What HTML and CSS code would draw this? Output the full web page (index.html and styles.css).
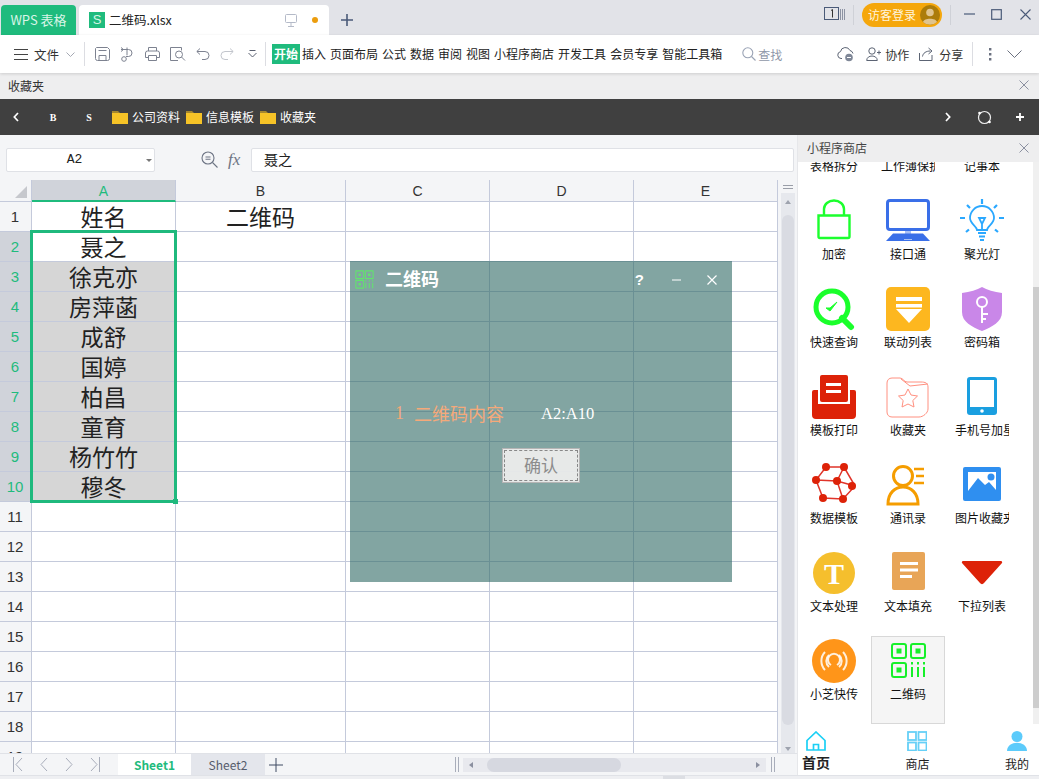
FILE: index.html
```html
<!DOCTYPE html>
<html lang="zh-CN">
<head>
<meta charset="utf-8">
<title>二维码.xlsx</title>
<link rel="stylesheet" href="styles.css">
</head>
<body>
<div class="app">
  <header class="titlebar">
    <div class="tab-home">WPS 表格</div>
    <div class="tab-doc">
      <span class="s-badge">S</span>
      <span class="doc-name">二维码.xlsx</span>
      <svg class="doc-mon" viewBox="0 0 12 13" width="12" height="13"><rect x=".5" y=".5" width="11" height="8" rx="1" fill="none" stroke="#b4bac8"/><path d="M6 9v3M3 12.500h6" stroke="#b4bac8"/></svg>
      <span class="doc-dot"></span>
    </div>
    <svg class="tab-plus" viewBox="0 0 12 12" width="12" height="12"><path d="M6 0v12M0 6h12" stroke="#4a5a78" stroke-width="1.600"/></svg>
    <div class="title-right">
      <svg viewBox="0 0 21 14" width="21" height="14"><rect x=".5" y=".5" width="14" height="12" fill="none" stroke="#4a5a78"/><path d="M7 3.500l1.500-1v8" fill="none" stroke="#333"/><path d="M16.500 2v11M18.500 2v11M20.500 2v11" stroke="#8d93a3"/></svg>
      <span class="vline"></span>
      <div class="login"><span>访客登录</span>
        <svg class="avatar" viewBox="0 0 20 20" width="20" height="20"><circle cx="10" cy="10" r="10" fill="#ac7c0a"/><circle cx="10" cy="7.500" r="3.800" fill="#e0c48e"/><path d="M3 17c1-4.500 13-4.500 14 0a10 10 0 0 1-14 0z" fill="#e0c48e"/></svg>
      </div>
      <span class="vline"></span>
      <svg viewBox="0 0 12 12" width="12" height="12" class="win-min"><path d="M0 6h11" stroke="#4a5a78" stroke-width="1.200"/></svg>
      <svg viewBox="0 0 11 11" width="11" height="11" class="win-max"><rect x=".7" y=".7" width="9.600" height="9.600" fill="none" stroke="#4a5a78" stroke-width="1.200"/></svg>
      <svg viewBox="0 0 11 11" width="11" height="11" class="win-close"><path d="M.5.500l10 10M10.500.500l-10 10" stroke="#4a5a78" stroke-width="1.100"/></svg>
    </div>
  </header>

  <nav class="toolbar">
    <svg class="t-menu" viewBox="0 0 14 11" width="14" height="11"><path d="M0 .5h14M0 5.500h14M0 10.500h14" stroke="#444"/></svg>
    <span class="t-file">文件</span>
    <svg class="t-chev" viewBox="0 0 9 5" width="9" height="5"><path d="M.5.500l4 4 4-4" fill="none" stroke="#a5a9b3"/></svg>
    <span class="t-div"></span>
    <div class="t-icons">
      <svg viewBox="0 0 15 14" width="15" height="14"><path d="M1.500.5h11l2 2v9a2 2 0 0 1-2 2h-10a2 2 0 0 1-2-2v-10z M4 13.500v-5h7v5M3.500 3.500h8" fill="none" stroke="#7d8290"/></svg>
      <svg viewBox="0 0 15 15" width="15" height="15"><path d="M1 2.500h7.500a3.500 3.500 0 0 1 0 7H6M7 .5v7.800M1 .5l2.500 2-2.500 2" fill="none" stroke="#7d8290"/><circle cx="4" cy="12" r="2.300" fill="none" stroke="#7d8290"/></svg>
      <svg viewBox="0 0 15 14" width="15" height="14"><path d="M3.500 4V.5h8V4M3 10.500H.5V6a2 2 0 0 1 2-2h10a2 2 0 0 1 2 2v4.500H12M3.500 8.500h8v5h-8z" fill="none" stroke="#7d8290"/></svg>
      <svg viewBox="0 0 16 14" width="16" height="14"><path d="M8 13.500H.5V.5h11v3" fill="none" stroke="#7d8290"/><circle cx="9" cy="7.500" r="3.500" fill="none" stroke="#7d8290"/><path d="M11.500 10l3.500 3.500" stroke="#7d8290"/></svg>
      <svg viewBox="0 0 14 12" width="14" height="12"><path d="M4 .5L.8 3.500 4 6.500M1 3.500h8a4 4 0 0 1 0 8H6" fill="none" stroke="#7d8290"/></svg>
      <svg viewBox="0 0 14 12" width="14" height="12"><path d="M10 .5l3.200 3-3.200 3M13 3.500H5a4 4 0 0 0 0 8h3" fill="none" stroke="#c2c5cc"/></svg>
      <svg class="t-more" viewBox="0 0 9 8" width="9" height="8"><path d="M.5 3l4 4 4-4M1.500.5h6" fill="none" stroke="#5a6070"/></svg>
    </div>
    <span class="t-div t-div2"></span>
    <div class="t-tabs">
      <span class="t-active">开始</span>
      <span>插入</span><span>页面布局</span><span>公式</span><span>数据</span><span>审阅</span><span>视图</span><span>小程序商店</span><span>开发工具</span><span>会员专享</span><span>智能工具箱</span>
    </div>
    <div class="t-search">
      <svg viewBox="0 0 14 14" width="14" height="14"><circle cx="5.800" cy="5.800" r="5" fill="none" stroke="#9aa3b5" stroke-width="1.100"/><path d="M9.500 9.500l4 4" stroke="#9aa3b5" stroke-width="1.100"/></svg>
      <span>查找</span>
    </div>
    <div class="t-right">
      <svg class="t-cloud" viewBox="0 0 17 16" width="17" height="16"><path d="M5 12.500H4A3.500 3.500 0 0 1 3.500 5.600 5 5 0 0 1 13 4.500a4 4 0 0 1 3 3" fill="none" stroke="#5c6474"/><circle cx="12" cy="11.500" r="3.800" fill="#7f8797"/><path d="M10 11.500h4" stroke="#fff"/></svg>
      <svg class="t-collab" viewBox="0 0 15 14" width="15" height="14"><circle cx="6" cy="4" r="3.200" fill="none" stroke="#5c6474"/><path d="M.7 13.500c0-6 10.600-6 10.600 0zM11 5.500h4M13 3.500v4" fill="none" stroke="#5c6474"/></svg>
      <span>协作</span>
      <svg class="t-share" viewBox="0 0 15 14" width="15" height="14"><path d="M.5 6v7.500h12.500V8M3.500 9.500c.5-3.500 3.500-5.500 8-5.500M9.500 1l3.500 3-3.500 3" fill="none" stroke="#5c6474"/></svg>
      <span>分享</span>
      <span class="t-div t-div3"></span>
      <svg class="t-dots" viewBox="0 0 3 13" width="3" height="13"><path d="M0 0h2.400v2.400H0zM0 5h2.400v2.400H0zM0 10h2.400v2.400H0z" fill="#6b7180"/></svg>
      <svg class="t-down" viewBox="0 0 15 8" width="15" height="8"><path d="M.5.500l7 7 7-7" fill="none" stroke="#6b7180"/></svg>
    </div>
  </nav>

  <div class="favbar">
    <span>收藏夹</span>
    <svg viewBox="0 0 10 10" width="10" height="10"><path d="M.5.500l9 9M9.500.500l-9 9" stroke="#8b90a0"/></svg>
  </div>

  <div class="darkbar">
    <svg class="d-back" viewBox="0 0 6 10" width="6" height="10"><path d="M5 1L1.300 5 5 9" fill="none" stroke="#fff" stroke-width="1.700"/></svg>
    <span class="d-letter d-b">B</span>
    <span class="d-letter d-s">S</span>
    <div class="d-folder">
      <svg viewBox="0 0 16 14" width="16" height="14"><path d="M0 1h6l2 2h8v2H0z" fill="#a5872f"/><path d="M0 3h16v11H0z" fill="#f6c327"/></svg><span>公司资料</span>
      <svg viewBox="0 0 16 14" width="16" height="14"><path d="M0 1h6l2 2h8v2H0z" fill="#a5872f"/><path d="M0 3h16v11H0z" fill="#f6c327"/></svg><span>信息模板</span>
      <svg viewBox="0 0 16 14" width="16" height="14"><path d="M0 1h6l2 2h8v2H0z" fill="#a5872f"/><path d="M0 3h16v11H0z" fill="#f6c327"/></svg><span>收藏夹</span>
    </div>
    <div class="d-right">
      <svg viewBox="0 0 6 10" width="6" height="10"><path d="M1 1l3.700 4L1 9" fill="none" stroke="#fff" stroke-width="1.700"/></svg>
      <svg viewBox="0 0 15 15" width="15" height="15"><circle cx="7.500" cy="7.500" r="6" fill="none" stroke="#eee" stroke-width="1.200"/><circle cx="2.500" cy="3" r="1.300" fill="#fff"/><circle cx="12.500" cy="12" r="1.300" fill="#fff"/></svg>
      <svg viewBox="0 0 8 8" width="8" height="8"><path d="M4 0v8M0 4h8" stroke="#fff" stroke-width="1.800"/></svg>
    </div>
  </div>

  <div class="body">
    <main class="sheet">
      <div class="formula">
        <div class="namebox"><span>A2</span><i class="namecaret"></i></div>
        <svg class="f-zoom" viewBox="0 0 17 17" width="17" height="17"><circle cx="7" cy="7" r="6" fill="none" stroke="#6d7484" stroke-width="1.100"/><path d="M11.500 11.500l5 5M4.500 6h5M4.500 8.200h5" stroke="#6d7484" stroke-width="1.100"/></svg>
        <span class="f-x">fx</span>
        <div class="f-input">聂之</div>
      </div>
      <div class="gridwrap">
        <div class="grid">
          <div class="corner"><i></i></div>
          <div class="ch ch-on">A</div><div class="ch">B</div><div class="ch">C</div><div class="ch">D</div><div class="ch">E</div>

          <div class="rh">1</div><div class="c">姓名</div><div class="c">二维码</div><div class="c"></div><div class="c"></div><div class="c"></div>
          <div class="rh rh-on">2</div><div class="c">聂之</div><div class="c"></div><div class="c"></div><div class="c"></div><div class="c"></div>
          <div class="rh rh-on">3</div><div class="c c-sel">徐克亦</div><div class="c"></div><div class="c"></div><div class="c"></div><div class="c"></div>
          <div class="rh rh-on">4</div><div class="c c-sel">房萍菡</div><div class="c"></div><div class="c"></div><div class="c"></div><div class="c"></div>
          <div class="rh rh-on">5</div><div class="c c-sel">成舒</div><div class="c"></div><div class="c"></div><div class="c"></div><div class="c"></div>
          <div class="rh rh-on">6</div><div class="c c-sel">国婷</div><div class="c"></div><div class="c"></div><div class="c"></div><div class="c"></div>
          <div class="rh rh-on">7</div><div class="c c-sel">柏昌</div><div class="c"></div><div class="c"></div><div class="c"></div><div class="c"></div>
          <div class="rh rh-on">8</div><div class="c c-sel">童育</div><div class="c"></div><div class="c"></div><div class="c"></div><div class="c"></div>
          <div class="rh rh-on">9</div><div class="c c-sel">杨竹竹</div><div class="c"></div><div class="c"></div><div class="c"></div><div class="c"></div>
          <div class="rh rh-on">10</div><div class="c c-sel">穆冬</div><div class="c"></div><div class="c"></div><div class="c"></div><div class="c"></div>
          <div class="rh">11</div><div class="c"></div><div class="c"></div><div class="c"></div><div class="c"></div><div class="c"></div>
          <div class="rh">12</div><div class="c"></div><div class="c"></div><div class="c"></div><div class="c"></div><div class="c"></div>
          <div class="rh">13</div><div class="c"></div><div class="c"></div><div class="c"></div><div class="c"></div><div class="c"></div>
          <div class="rh">14</div><div class="c"></div><div class="c"></div><div class="c"></div><div class="c"></div><div class="c"></div>
          <div class="rh">15</div><div class="c"></div><div class="c"></div><div class="c"></div><div class="c"></div><div class="c"></div>
          <div class="rh">16</div><div class="c"></div><div class="c"></div><div class="c"></div><div class="c"></div><div class="c"></div>
          <div class="rh">17</div><div class="c"></div><div class="c"></div><div class="c"></div><div class="c"></div><div class="c"></div>
          <div class="rh">18</div><div class="c"></div><div class="c"></div><div class="c"></div><div class="c"></div><div class="c"></div>
          <div class="rh">19</div><div class="c"></div><div class="c"></div><div class="c"></div><div class="c"></div><div class="c"></div>
          <div class="selection"><i></i></div>
        </div>
        <div class="vscroll">
          <div class="vs-grip"></div>
          <div class="vs-track"><i class="vs-up"></i><div class="vs-thumb"></div><i class="vs-arrow"></i></div>
        </div>
      </div>
      <div class="tabbar">
        <div class="tb-nav">
          <svg viewBox="0 0 10 15" width="10" height="15"><path d="M.5 0v15M9 1L3 7.500 9 14" fill="none" stroke="#a8adba"/></svg>
          <svg viewBox="0 0 8 15" width="8" height="15"><path d="M7 1L1 7.500 7 14" fill="none" stroke="#a8adba"/></svg>
          <svg viewBox="0 0 8 15" width="8" height="15"><path d="M1 1l6 6.500L1 14" fill="none" stroke="#a8adba"/></svg>
          <svg viewBox="0 0 10 15" width="10" height="15"><path d="M9.500 0v15M1 1l6 6.500L1 14" fill="none" stroke="#a8adba"/></svg>
        </div>
        <div class="tb-on">Sheet1</div>
        <div class="tb-off">Sheet2</div>
        <svg class="tb-add" viewBox="0 0 14 14" width="14" height="14"><path d="M7 0v14M0 7h14" stroke="#3f4a62"/></svg>
        <svg class="tb-split" viewBox="0 0 4 15" width="4" height="15"><path d="M.5 0v15M3.500 0v15" stroke="#a8adba"/></svg>
        <div class="hscroll"><i class="hs-l"></i><div class="hs-thumb"></div><i class="hs-r"></i></div>
        <svg class="tb-split2" viewBox="0 0 4 15" width="4" height="15"><path d="M.5 0v15M3.500 0v15" stroke="#a8adba"/></svg>
      </div>
    </main>

    <aside class="panel">
      <div class="p-head">
        <span>小程序商店</span>
        <svg viewBox="0 0 10 10" width="10" height="10"><path d="M.5.500l9 9M9.500.500l-9 9" stroke="#8b90a0"/></svg>
      </div>
      <div class="p-main">
        <div class="p-list">
          <div class="p-grid">
            <div class="app-i"><div class="ico"></div><div class="lbl">表格拆分</div></div>
            <div class="app-i"><div class="ico"></div><div class="lbl">工作薄保护</div></div>
            <div class="app-i"><div class="ico"></div><div class="lbl">记事本</div></div>

            <div class="app-i"><div class="ico"><svg viewBox="0 0 44 44" width="44" height="44"><path d="M6.500 16.500h31v21a1.500 1.500 0 0 1-1.500 1.500H8a1.500 1.500 0 0 1-1.500-1.500z M12 16v-6a10 8.500 0 0 1 20 0v6" fill="none" stroke="#1cff2e" stroke-width="2.400"/></svg></div><div class="lbl">加密</div></div>
            <div class="app-i"><div class="ico"><svg viewBox="0 0 44 44" width="44" height="44"><rect x="1.500" y="1.500" width="41" height="29" rx="2.500" fill="none" stroke="#3a6fe8" stroke-width="3"/><path d="M19 32h6v3h-6z" fill="#a9c0f5"/><path d="M7 34.500h30l7 7.500H0z" fill="#3a6fe8"/><path d="M18 40.500h8" stroke="#a9c0f5"/></svg></div><div class="lbl">接口通</div></div>
            <div class="app-i"><div class="ico"><svg viewBox="0 0 44 44" width="44" height="44"><g fill="none" stroke="#2aa8ff" stroke-width="1.800"><path d="M17 31c0-4-7-6-7-12a12 12 0 0 1 24 0c0 6-7 8-7 12z"/><path d="M18 34h8M19 37.500h6M20 41h4" stroke-width="2"/><path d="M19 19h6l-3 6zM22 25v6"/></g><path d="M22 0v5M7 6l3 3M37 6l-3 3M0 19h5M39 19h5M6 33l3-2.500M38 33l-3-2.500" stroke="#2aa8ff" stroke-width="2.200"/></svg></div><div class="lbl">聚光灯</div></div>

            <div class="app-i"><div class="ico"><svg viewBox="0 0 44 44" width="44" height="44"><circle cx="20" cy="20" r="16" fill="none" stroke="#1aff2b" stroke-width="5"/><path d="M30 31l9 9" stroke="#1aff2b" stroke-width="6" stroke-linecap="round"/><path d="M14 21l4 3 7-9-7 6z" fill="#1aff2b" stroke="#1aff2b"/></svg></div><div class="lbl">快速查询</div></div>
            <div class="app-i"><div class="ico"><svg viewBox="0 0 44 44" width="44" height="44"><rect width="44" height="44" rx="5" fill="#fdb71f"/><path d="M10 10h26v4H10zM10 17h26v3.500H10zM10 22h26L23 36z" fill="#fff"/></svg></div><div class="lbl">联动列表</div></div>
            <div class="app-i"><div class="ico"><svg viewBox="0 0 44 44" width="44" height="44"><path d="M22 0c5 3 12 5 20 6v19c0 10-10 15-20 19C12 40 2 35 2 25V6c8-1 15-3 20-6z" fill="#c987e8"/><circle cx="22" cy="15" r="5" fill="none" stroke="#fff" stroke-width="2"/><path d="M22 20v16M22 27h6M22 32h4" stroke="#fff" stroke-width="2"/></svg></div><div class="lbl">密码箱</div></div>

            <div class="app-i"><div class="ico"><svg viewBox="0 0 44 44" width="44" height="44"><rect x="8" y="0" width="28" height="27" rx="2" fill="#dd2208"/><path d="M14 8h15v3H14zM14 15h15v3H14z" fill="#fff"/><path d="M0 17a2 2 0 0 1 2-2h4v14h32V15h4a2 2 0 0 1 2 2v23a4 4 0 0 1-4 4H4a4 4 0 0 1-4-4z" fill="#dd2208"/></svg></div><div class="lbl">模板打印</div></div>
            <div class="app-i"><div class="ico"><svg viewBox="0 0 44 44" width="44" height="44"><path d="M6 3h8c3 0 4 4 7 4h14c4 0 7 1 7 5v22c0 4-5 8-9 8H6c-3 0-5-2-5-5V8c0-3 2-5 5-5zM15 4l9 7 18-2" fill="none" stroke="#ff9080"/><path d="M22 14l3 6 6.500 1-4.700 4.500 1.200 6.500-6-3-6 3 1.200-6.500L12.500 21l6.500-1z" fill="none" stroke="#ff9080"/></svg></div><div class="lbl">收藏夹</div></div>
            <div class="app-i"><div class="ico"><svg viewBox="0 0 44 44" width="44" height="44"><rect x="7" y="2" width="30" height="38" rx="3" fill="#1a9fe0"/><rect x="10" y="5" width="24" height="27" fill="#fff"/><circle cx="22" cy="36" r="1.800" fill="#fff"/></svg></div><div class="lbl lbl-clip">手机号加星</div></div>

            <div class="app-i"><div class="ico"><svg viewBox="0 0 44 44" width="44" height="44"><path d="M14 4h18l11 19-12 13-20-1L4 17zM4 17l21 1 18 5M25 18l7-14M25 18l6 18" fill="none" stroke="#e0342a" stroke-width="1.500"/><g fill="#dd2208"><circle cx="14" cy="4" r="4"/><circle cx="32" cy="4" r="4"/><circle cx="25" cy="18" r="4"/><circle cx="4" cy="17" r="4"/><circle cx="40" cy="23" r="4"/><circle cx="11" cy="35" r="4"/><circle cx="31" cy="36" r="4"/></g></svg></div><div class="lbl">数据模板</div></div>
            <div class="app-i"><div class="ico"><svg viewBox="0 0 44 44" width="44" height="44"><circle cx="17" cy="13" r="9.500" fill="none" stroke="#f59d00" stroke-width="3"/><path d="M2 41c0-11 7-17 15-17s15 6 15 17z" fill="none" stroke="#f59d00" stroke-width="3"/><path d="M28 6h10M30 13h8M28 20h10" stroke="#f59d00" stroke-width="2.400"/></svg></div><div class="lbl">通讯录</div></div>
            <div class="app-i"><div class="ico"><svg viewBox="0 0 44 44" width="44" height="44"><rect x="3" y="4" width="38" height="34" rx="2" fill="#2f8ff0"/><path d="M8 9h28v20H8z" fill="#fff"/><path d="M8 28l10-13 7 7 4-3 7 8v5H8z" fill="#2f8ff0"/><circle cx="31" cy="14" r="3.500" fill="#2f8ff0"/></svg></div><div class="lbl lbl-clip">图片收藏夹</div></div>

            <div class="app-i"><div class="ico"><svg viewBox="0 0 44 44" width="44" height="44"><circle cx="22" cy="22" r="21" fill="#f5bf2d"/><text x="22" y="33" class="t-letter">T</text></svg></div><div class="lbl">文本处理</div></div>
            <div class="app-i"><div class="ico"><svg viewBox="0 0 44 44" width="44" height="44"><rect x="6" y="1" width="33" height="38" rx="2" fill="#e8a557"/><path d="M14 11h18v3H14zM14 17.500h18v3H14zM14 24h12v3H14z" fill="#fff"/></svg></div><div class="lbl">文本填充</div></div>
            <div class="app-i"><div class="ico"><svg viewBox="0 0 44 44" width="44" height="44"><path d="M3 10h38c1 0 1.500 1 1 2L24 32c-1 1.500-3 1.500-4 0L2 12c-.5-1 0-2 1-2z" fill="#dd2208"/></svg></div><div class="lbl">下拉列表</div></div>

            <div class="app-i"><div class="ico"><svg viewBox="0 0 44 44" width="44" height="44"><circle cx="22" cy="22" r="22" fill="#ff9519"/><g fill="none" stroke="#fff" stroke-opacity=".85" stroke-width="2"><path d="M13 13A13 13 0 0 0 13 31M31 13A13 13 0 0 1 31 31M17 16A8 8 0 0 0 17 28M27 16A8 8 0 0 1 27 28"/><path d="M19 26A6 6 0 1 1 25 26"/></g></svg></div><div class="lbl">小芝快传</div></div>
            <div class="app-i app-on"><div class="ico"><svg viewBox="0 0 44 44" width="44" height="44"><g fill="none" stroke="#16f02a" stroke-width="2"><rect x="6" y="5" width="14" height="14" rx="2"/><rect x="25" y="5" width="14" height="14" rx="2"/><rect x="6" y="24" width="14" height="14" rx="2"/><path d="M26 23v2.500M26 28v10M32 23v2.500M32 28v10M38 23v2.500M38 28v10"/></g><path d="M10.500 9.500h5v5h-5zM29.500 9.500h5v5h-5zM10.500 28.500h5v5h-5z" fill="#16f02a"/></svg></div><div class="lbl">二维码</div></div>
          </div>
        </div>
        <div class="p-scroll"><div class="p-thumb"></div></div>
      </div>
      <div class="p-foot">
        <div class="p-nav p-nav-on"><svg viewBox="0 0 20 20" width="20" height="20"><path d="M1 9.500L10 1l9 8.500V19H1z M7.500 19v-5.500h5V19" fill="none" stroke="#1bd0f5" stroke-width="1.700"/></svg><span>首页</span></div>
        <div class="p-nav"><svg viewBox="0 0 20 20" width="20" height="20"><g fill="#fff" stroke="#66d0f7" stroke-width="1.800"><rect x="1" y="1" width="8" height="8"/><rect x="11.500" y="1" width="8" height="8"/><rect x="1" y="11.500" width="8" height="8"/><rect x="11.500" y="11.500" width="8" height="8"/></g></svg><span>商店</span></div>
        <div class="p-nav"><svg viewBox="0 0 20 20" width="20" height="20"><circle cx="10" cy="5.500" r="5.500" fill="#5ccbfb"/><path d="M0 20c0-11 20-11 20 0z" fill="#5ccbfb"/></svg><span>我的</span></div>
      </div>
    </aside>
  </div>

  <footer class="statusline"><i></i></footer>

  <section class="dialog">
    <div class="dlg-title">
      <svg viewBox="0 0 44 44" width="19" height="19"><g fill="none" stroke="#62e46e" stroke-width="2.400"><rect x="2" y="2" width="18" height="18" rx="1"/><rect x="24" y="2" width="18" height="18" rx="1"/><rect x="2" y="24" width="18" height="18" rx="1"/><path d="M25 24v3M25 30v12M33 24v3M33 30v12M41 24v3M41 30v12"/></g><path d="M8 8h6v6H8zM30 8h6v6h-6zM8 30h6v6H8z" fill="#62e46e"/></svg>
      <span class="dlg-name">二维码</span>
      <span class="dlg-q">?</span>
      <svg class="dlg-min" viewBox="0 0 9 2" width="9" height="2"><path d="M0 1h9" stroke="#fff"/></svg>
      <svg class="dlg-x" viewBox="0 0 10 10" width="10" height="10"><path d="M.5.500l9 9M9.500.500l-9 9" stroke="#fff" stroke-width="1.200"/></svg>
    </div>
    <div class="dlg-row"><span class="dlg-num">1</span><span class="dlg-label">二维码内容</span><span class="dlg-val">A2:A10</span></div>
    <div class="dlg-btn"><span>确认</span></div>
  </section>
</div>
</body>
</html>
```
FILE: styles.css
```css
* { box-sizing: border-box; }
html, body { margin: 0; padding: 0; }
body { font-family: "Noto Sans CJK SC", "Liberation Sans", sans-serif; color: #222; overflow: hidden; }
svg { display: block; flex: none; }
i { display: block; }
.app { position: relative; width: 1039px; height: 779px; overflow: hidden; display: flex; flex-direction: column; background: #f0f1f4; }

/* title bar */
.titlebar { height: 35px; flex: none; background: #e2e3e8; display: flex; align-items: flex-end; padding-left: 1px; }
.tab-home { width: 75px; height: 30px; background: #1fbb7d; color: #d9f5e8; border-radius: 4px 4px 0 0; font: 13px/30px "Noto Sans CJK SC", "Liberation Sans", sans-serif; text-align: center; }
.tab-doc { width: 250px; height: 30px; margin-left: 3px; background: #fff; border-radius: 4px 4px 0 0; display: flex; align-items: center; padding-left: 10px; position: relative; }
.s-badge { width: 16px; height: 16px; background: #1fbb7d; color: #d6f5e6; font: 13px/16px "Liberation Sans", sans-serif; text-align: center; }
.doc-name { margin-left: 4px; font-size: 12.500px; color: #222; line-height: 16px; }
.doc-mon { margin-left: 113px; }
.doc-dot { width: 6px; height: 6px; border-radius: 50%; background: #ec9d0d; margin-left: 15px; }
.tab-plus { margin: 0 0 9px 12px; }
.title-right { margin-left: auto; height: 35px; display: flex; align-items: flex-start; padding-top: 7px; }
.vline { width: 1px; height: 20px; background: #cfd1d7; margin: -2px 8px 0 8px; }
.login { width: 80px; height: 24px; margin-top: -4px; border-radius: 12px; background: #f5a70c; color: #fff5dc; font-size: 12px; line-height: 24px; display: flex; justify-content: space-between; align-items: center; padding: 0 2px 0 6px; }
.win-min { margin: 1px 0 0 5px; }
.win-max { margin: 2px 0 0 15px; }
.win-close { margin: 2px 8px 0 18px; }

/* toolbar */
.toolbar { height: 38px; flex: none; background: #fff; display: flex; align-items: center; padding-left: 14px; box-shadow: 0 1px 3px rgba(0,0,0,.14); position: relative; z-index: 2; font-size: 12px; color: #333; }
.t-file { margin-left: 6px; font-size: 12.500px; width: 24px; white-space: nowrap; }
.t-chev { margin-left: 8px; }
.t-div { width: 1px; height: 24px; background: #dcdde2; margin-left: 9px; }
.t-icons { display: flex; align-items: center; gap: 10px; margin-left: 10px; width: 161px; }
.t-more { margin-left: 4px; }
.t-div2 { margin-left: 9px; }
.t-tabs { display: flex; align-items: center; gap: 4px; margin-left: 6px; color: #222; white-space: nowrap; line-height: 20px; }
.t-active { width: 28px; height: 20px; background: #1fbb7d; color: #fff; font-weight: 700; text-align: center; margin-right: -2px; }
.t-search { display: flex; align-items: center; gap: 2px; margin-left: 20px; color: #8f97a8; }
.t-right { display: flex; align-items: center; margin-left: 55px; }
.t-collab { margin: 0 4px 0 12px; }
.t-share { margin: 0 5px 0 10px; }
.t-div3 { margin-left: 9px; }
.t-dots { margin-left: 16px; }
.t-down { margin-left: 15px; }

/* favourites */
.favbar { height: 26px; flex: none; background: #eeeeef; display: flex; align-items: center; justify-content: space-between; padding: 0 10px 2px 8px; font-size: 12px; color: #333; }
.darkbar { height: 36px; flex: none; background: #404040; color: #fff; display: flex; align-items: center; font-size: 12px; padding-left: 13px; }
.d-letter { font: 700 10px "Liberation Serif", serif; width: 8px; text-align: center; }
.d-b { margin-left: 30px; }
.d-s { margin-left: 28px; }
.d-folder { display: flex; align-items: center; margin-left: 19px; }
.d-folder span { margin: 0 6px 0 4px; line-height: 16px; }
.d-right { margin-left: auto; display: flex; align-items: center; padding-right: 15px; }
.d-right svg:nth-child(2) { margin: 0 24px 0 26px; }

/* body */
.body { flex: 1; min-height: 0; display: flex; }
.sheet { width: 797px; flex: none; display: flex; flex-direction: column; background: #f4f5f7; }
.formula { height: 45px; flex: none; display: flex; align-items: flex-start; padding: 13px 3px 0 6px; }
.namebox { width: 149px; height: 24px; background: #fff; border: 1px solid #dfe1e6; border-radius: 2px; position: relative; font: 13px/22px "Liberation Mono", monospace; color: #222; padding-right: 12px; text-align: center; }
.namecaret { position: absolute; right: 2px; top: 10px; border: 3px solid transparent; border-top: 3px solid #777; }
.f-zoom { margin: 3px 0 0 46px; }
.f-x { margin-left: 10px; font: italic 17px/24px "Liberation Serif", serif; color: #6d7484; width: 23px; }
.f-input { flex: 1; height: 24px; background: #fff; border: 1px solid #dfe1e6; border-radius: 2px; font-size: 14px; line-height: 21px; padding-left: 12px; color: #222; }

.gridwrap { flex: 1; min-height: 0; display: flex; overflow: hidden; }
.grid { position: relative; width: 778px; flex: none; display: grid; grid-template-columns: 32px 144px 170px 144px 144px 144px; grid-template-rows: 22px repeat(19, 30px); overflow: hidden; background: #fff; }
.corner { background: #f4f5f7; border-bottom: 1px solid #c4cadb; border-right: 1px solid #c4cadb; position: relative; }
.corner i { position: absolute; right: 4px; bottom: 3px; width: 0; height: 0; border-left: 12px solid transparent; border-bottom: 12px solid #c6c8cd; }
.ch { background: #f4f5f7; border-bottom: 1px solid #c4cadb; border-right: 1px solid #c4cadb; text-align: center; font: 14px/22px "Liberation Sans", sans-serif; color: #333; }
.ch-on { background: #d0d3da; color: #1fbb7d; border-bottom: 2px solid #1fbb7d; }
.rh { background: #f4f5f7; border-bottom: 1px solid #c4cadb; border-right: 1px solid #c4cadb; font: 15px/29px "Liberation Sans", sans-serif; text-align: center; color: #333; padding-right: 1px; }
.rh-on { background: #d0d3da; color: #1fbb7d; }
.c { border-bottom: 1px solid #c4cadb; border-right: 1px solid #c4cadb; font-size: 23px; line-height: 29px; text-align: center; color: #222; white-space: nowrap; }
.c-sel { background: #d6d6d6; }
.selection { position: absolute; left: 30px; top: 50px; width: 147px; height: 273px; border: 3px solid #1fb97d; pointer-events: none; }
.selection i { position: absolute; right: -4px; bottom: -4px; width: 5px; height: 5px; background: #1fb97d; }

.vscroll { flex: 1; background: #f4f5f7; position: relative; }
.vs-grip { position: absolute; left: 5px; top: 5px; width: 10px; height: 4px; border-top: 1px solid #9a9ea8; border-bottom: 1px solid #9a9ea8; }
.vs-track { position: absolute; left: 3px; right: 2px; top: 13px; bottom: 0; background: #e6e8ed; }
.vs-up { position: absolute; left: 4px; top: 7px; border: 3px solid transparent; border-bottom: 4px solid #9ea3ae; border-top: 0; }
.vs-thumb { position: absolute; left: 1px; top: 22px; width: 12px; height: 510px; border-radius: 6px; background: #d9dbe2; }
.vs-arrow { position: absolute; left: 4px; bottom: 2px; border: 3px solid transparent; border-top: 4px solid #9ea3ae; border-bottom: 0; }

.tabbar { height: 22px; flex: none; background: #f4f5f7; display: flex; align-items: center; border-top: 1px solid #e0e2e7; }
.tb-nav { width: 118px; display: flex; align-items: center; gap: 17px; padding-left: 13px; }
.tb-on { width: 73px; height: 22px; background: #fff; color: #1fbb7d; font-size: 12px; font-weight: 700; line-height: 21px; text-align: center; }
.tb-off { width: 74px; height: 22px; background: #e4e6ec; color: #555b6b; font-size: 12px; line-height: 21px; text-align: center; }
.tb-add { margin-left: 4px; }
.tb-split { margin-left: 172px; }
.hscroll { width: 303px; height: 14px; margin-left: 4px; background: #e8e9ee; position: relative; }
.hs-thumb { position: absolute; left: 24px; top: 0; width: 134px; height: 14px; border-radius: 7px; background: #d6d8e0; }
.hs-l { position: absolute; left: 6px; top: 4px; border: 3px solid transparent; border-right: 4px solid #8b90a0; border-left: 0; }
.hs-r { position: absolute; right: 6px; top: 4px; border: 3px solid transparent; border-left: 4px solid #8b90a0; border-right: 0; }
.tb-split2 { margin-left: 5px; }

/* panel */
.panel { flex: 1; background: #fff; display: flex; flex-direction: column; border-left: 1px solid #e6e7ea; min-width: 0; }
.p-head { height: 27px; flex: none; background: #eeeeef; display: flex; align-items: center; justify-content: space-between; font-size: 12px; color: #444; padding: 0 10px 2px 9px; }
.p-main { flex: 1; min-height: 0; display: flex; }
.p-list { flex: 1; min-width: 0; overflow: hidden; }
.p-grid { margin: -54px 0 0 -1px; display: grid; grid-template-columns: repeat(3, 74px); grid-auto-rows: 88px; }
.app-i { display: flex; flex-direction: column; align-items: center; padding-top: 2px; border: 1px solid transparent; }
.ico { width: 44px; height: 44px; }
.lbl { margin-top: 3px; width: 54px; height: 16px; font-size: 12px; line-height: 16px; color: #111; text-align: center; white-space: nowrap; overflow: hidden; }
.lbl-clip { text-align: left; }
.app-on { background: #f5f5f5; border-color: #d8d8d8; }
.t-letter { font: 700 30px "Liberation Serif", serif; fill: #fff; text-anchor: middle; }
.p-scroll { width: 6px; flex: none; background: #f0f0f0; padding-top: 125px; padding-bottom: 16px; }
.p-thumb { height: 100%; background: #cdcdcd; }
.p-foot { height: 51px; flex: none; display: flex; justify-content: space-between; padding: 7px 10px 0 4px; }
.p-nav { display: flex; flex-direction: column; align-items: center; font-size: 12px; line-height: 16px; color: #222; gap: 5px; }
.p-nav-on { font-size: 14px; font-weight: 700; gap: 3px; }

.statusline { height: 4px; flex: none; background: #eeeff2; border-top: 1px solid #e0e2e7; position: relative; }
.statusline i { position: absolute; left: 663px; top: 0; width: 22px; height: 3px; background: #dcdee3; }

/* dialog */
.dialog { position: absolute; left: 350px; top: 261px; width: 382px; height: 321px; background: rgba(47,105,100,.6); color: #fff; z-index: 3; }
.dlg-title { display: flex; align-items: center; height: 37px; padding: 0 15px 0 5px; }
.dlg-name { margin: -3px 0 0 11px; font-size: 18px; font-weight: 700; }
.dlg-q { margin-left: auto; font: 700 15px "Liberation Sans", sans-serif; }
.dlg-min { margin-left: 28px; }
.dlg-x { margin-left: 26px; }
.dlg-row { margin-top: 103px; margin-bottom: 2px; padding-left: 45px; display: flex; align-items: center; height: 24px; }
.dlg-num { width: 19px; color: #f5a97a; font: 18px "Liberation Serif", serif; }
.dlg-label { color: #f5a97a; width: 127px; white-space: nowrap; font-size: 18px; }
.dlg-val { font: 16.500px "Liberation Serif", serif; color: #fff; margin-top: 2px; }
.dlg-btn { width: 78px; height: 35px; margin: 23px 0 0 152px; border: 1px solid #b5b5b5; background: rgba(236,236,236,.95); padding: 1px; }
.dlg-btn span { display: block; height: 100%; border: 1px dashed #888; color: #8c8c8c; font-size: 17px; line-height: 27px; text-align: center; }
```
